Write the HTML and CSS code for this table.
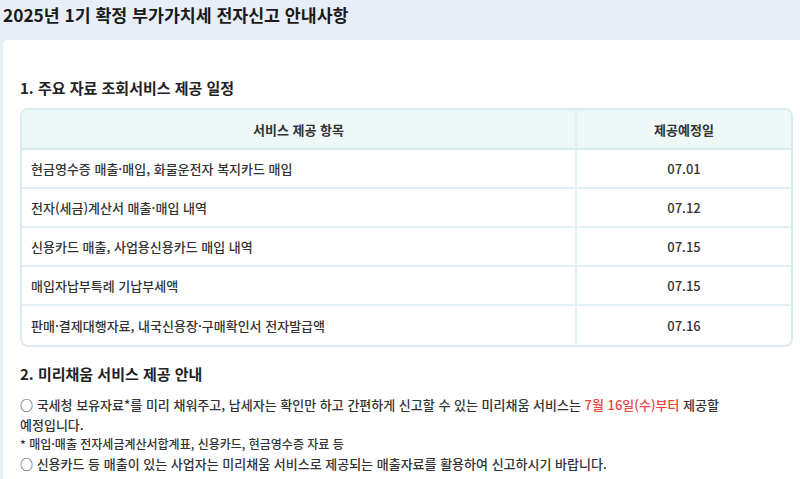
FILE: index.html
```html
<!DOCTYPE html>
<html lang="ko">
<head>
<meta charset="utf-8">
<link rel="stylesheet" href="styles.css">
</head>
<body>
<h1 class="page-title">2025년 1기 확정 부가가치세 전자신고 안내사항</h1>
<div class="card">
  <h2 class="sec-title">1. 주요 자료 조회서비스 제공 일정</h2>
  <table class="sched">
    <thead>
      <tr><th class="c-item">서비스 제공 항목</th><th class="c-date">제공예정일</th></tr>
    </thead>
    <tbody>
      <tr><td class="c-item">현금영수증 매출·매입, 화물운전자 복지카드 매입</td><td class="c-date">07.01</td></tr>
      <tr><td class="c-item">전자(세금)계산서 매출·매입 내역</td><td class="c-date">07.12</td></tr>
      <tr><td class="c-item">신용카드 매출, 사업용신용카드 매입 내역</td><td class="c-date">07.15</td></tr>
      <tr><td class="c-item">매입자납부특례 기납부세액</td><td class="c-date">07.15</td></tr>
      <tr><td class="c-item">판매·결제대행자료, 내국신용장·구매확인서 전자발급액</td><td class="c-date">07.16</td></tr>
    </tbody>
  </table>
  <h2 class="sec-title sec-2">2. 미리채움 서비스 제공 안내</h2>
  <div class="notes">
    <p>○ 국세청 보유자료*를 미리 채워주고, 납세자는 확인만 하고 간편하게 신고할 수 있는 미리채움 서비스는 <span class="red">7월 16일(수)부터</span> 제공할<br>예정입니다.</p>
    <p class="small">* 매입·매출 전자세금계산서합계표, 신용카드, 현금영수증 자료 등</p>
    <p>○ 신용카드 등 매출이 있는 사업자는 미리채움 서비스로 제공되는 매출자료를 활용하여 신고하시기 바랍니다.</p>
  </div>
</div>
</body>
</html>
```

FILE: styles.css
```css
* { box-sizing: border-box; }
html, body {
  margin: 0;
  padding: 0;
  background: #e8eef8;
  font-family: "Noto Sans CJK KR", "Noto Sans", sans-serif;
  color: #333;
  overflow: hidden;
}
.page-title {
  margin: 0;
  height: 40px;
  padding: 3px 0 0 3px;
  font-size: 17.3px;
  line-height: 24px;
  font-weight: 700;
  color: #1a1a1a;
}
.card {
  margin-left: 3px;
  background: #fff;
  border-radius: 5px 0 0 0;
  padding: 38px 7px 40px 17px;
  min-height: 460px;
}
.sec-title {
  margin: 0 0 10px 0;
  font-size: 15px;
  line-height: 20px;
  font-weight: 700;
  color: #222;
}
.sec-2 {
  margin-top: 17px;
  margin-bottom: 11px;
}
.sched {
  width: 100%;
  border-collapse: separate;
  border-spacing: 0;
  border: 2px solid #d8ebee;
  border-radius: 8px;
  overflow: hidden;
  font-size: 13px;
  font-weight: 500;
}
.sched th, .sched td {
  padding: 0;
  border-bottom: 2px solid #e0eff1;
}
.sched tbody tr:last-child td { border-bottom: none; }
.sched th {
  height: 40px;
  background: #eef8f7;
  font-weight: 700;
  color: #333;
  border-bottom-color: #d8ebee;
}
.sched td { height: 39px; color: #333; }
.sched .c-item { width: 553px; }
.sched td.c-item { padding-left: 9px; text-align: left; }
.sched .c-date {
  text-align: center;
  border-left: 2px solid #e0eff1;
}
.notes { font-size: 13px; line-height: 19.5px; color: #333; font-weight: 500; }
.notes p { margin: 0; }
.notes .small { font-size: 12px; }
.red { color: #f04343; }
```
